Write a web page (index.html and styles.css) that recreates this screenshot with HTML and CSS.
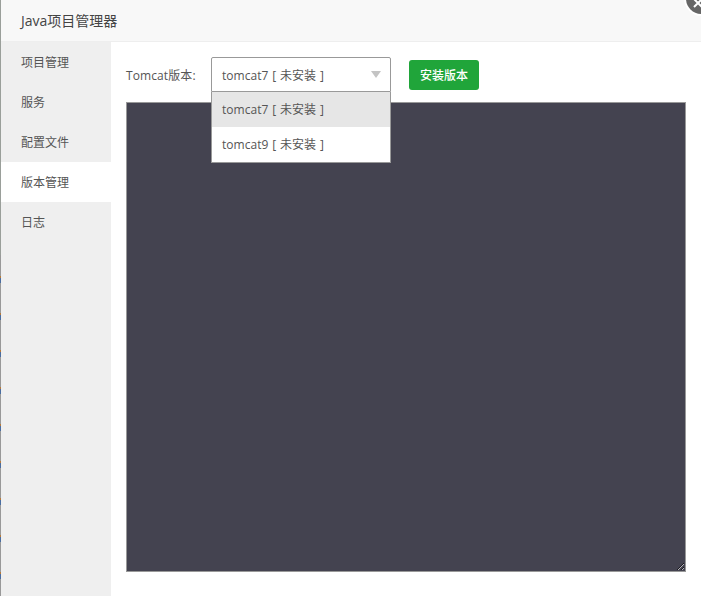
FILE: index.html
```html
<!DOCTYPE html>
<html lang="zh">
<head>
<meta charset="utf-8">
<title>Java项目管理器</title>
<link rel="stylesheet" href="styles.css">
</head>
<body>
<div class="backdrop"></div>
<div class="modal">
  <header class="title">Java项目管理器</header>
  <div class="main">
    <nav class="side">
      <div class="side-item">项目管理</div>
      <div class="side-item">服务</div>
      <div class="side-item">配置文件</div>
      <div class="side-item active">版本管理</div>
      <div class="side-item">日志</div>
    </nav>
    <section class="content">
      <div class="toolbar">
        <span class="label">Tomcat版本:</span>
        <div class="select">
          <div class="select-head">tomcat7 [ 未安装 ]<i class="caret"></i></div>
          <ul class="menu">
            <li class="opt on">tomcat7 [ 未安装 ]</li>
            <li class="opt">tomcat9 [ 未安装 ]</li>
          </ul>
        </div>
        <button class="btn">安装版本</button>
      </div>
      <textarea class="log"></textarea>
    </section>
  </div>
</div>
<div class="close">
  <svg width="10" height="10" viewBox="0 0 10 10"><path d="M1 9 9 1M1 1l8 8" stroke="#fff" stroke-width="2"/></svg>
</div>
</body>
</html>
```
FILE: styles.css
```css
* { box-sizing: border-box; }
html, body { margin: 0; height: 100%; }
body {
  position: relative;
  overflow: hidden;
  display: flex;
  width: 701px;
  height: 596px;
  background: #fff;
  font-family: "Open Sans", "Noto Sans CJK SC", sans-serif;
  font-size: 12px;
  color: #555;
}
.backdrop {
  width: 1px;
  flex: none;
  background:
    linear-gradient(#9a9f9a, #9a9f9a) top / 100% 255px no-repeat,
    repeating-linear-gradient(#999 0 17px, #b57a3c 17px 19px, #4a6da0 19px 24px, #999 24px 37px);
}
.modal { flex: 1; display: flex; flex-direction: column; min-width: 0; background: #fff; }
.title {
  height: 42px;
  flex: none;
  padding-left: 20px;
  line-height: 41px;
  font-size: 14px;
  color: #444;
  background: #f8f8f8;
  border-bottom: 1px solid #eee;
}
.main { flex: 1; display: flex; min-height: 0; }
.side { width: 110px; flex: none; background: #efefef; }
.side-item { height: 40px; padding-left: 20px; line-height: 42px; color: #555; }
.side-item.active { background: #fff; }
.content { flex: 1; padding: 15px 0 0 15px; min-width: 0; }
.toolbar { display: flex; align-items: flex-start; height: 45px; }
.label { width: 85px; flex: none; line-height: 37px; letter-spacing: .1px; }
.select { position: relative; width: 180px; flex: none; }
.select-head {
  position: relative;
  height: 35px;
  padding-left: 10px;
  line-height: 35px;
  word-spacing: .6px;
  letter-spacing: .05px;
  background: #fff;
  border: 1px solid #999;
  border-radius: 2px 2px 0 0;
}
.caret {
  position: absolute;
  top: 13px;
  right: 9px;
  border-style: solid;
  border-width: 7px 5.5px 0;
  border-color: #c4c4c4 transparent transparent;
}
.menu {
  position: absolute;
  top: 35px;
  left: 0;
  z-index: 2;
  width: 180px;
  margin: 0;
  padding: 0;
  list-style: none;
  background: #fff;
  border: 1px solid #999;
  border-top: 0;
  word-spacing: .6px;
  letter-spacing: .05px;
}
.opt { height: 35px; padding-left: 10px; line-height: 35px; }
.opt.on { background: #e6e6e6; }
.btn {
  margin: 3px 0 0 18px;
  width: 70px;
  height: 30px;
  padding: 0;
  border: 0;
  border-radius: 3px;
  background: #20a53a;
  color: #fff;
  font: inherit;
  font-weight: 500;
}
.log {
  display: block;
  width: 560px;
  height: 470px;
  margin: 0;
  border: 1px solid #999;
  background: #444350;
  outline: 0;
}
.close {
  position: absolute;
  top: -17px;
  right: -16px;
  width: 31px;
  height: 31px;
  padding: 15px 0 0 7px;
  border-radius: 50%;
  background: #666;
  box-shadow: 0 0 0 2px #fff;
}
.close svg { display: block; }
```
